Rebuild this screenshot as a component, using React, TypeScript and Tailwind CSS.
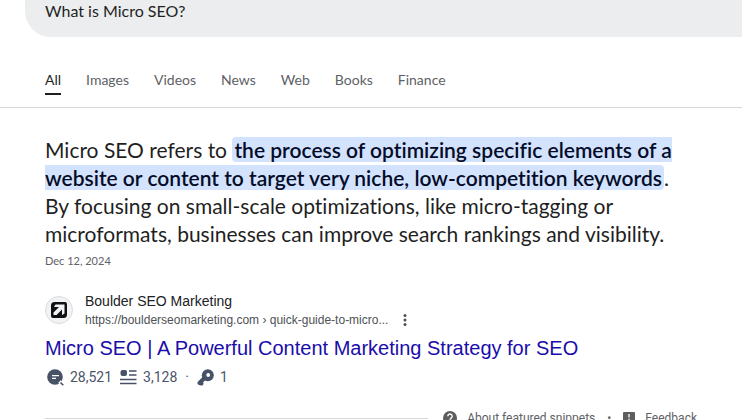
const tabs = [
  { label: "Images" },
  { label: "Videos" },
  { label: "News" },
  { label: "Web" },
  { label: "Books" },
  { label: "Finance" },
];

function SearchBar() {
  return (
    <form className="ml-[25px] h-[37px] rounded-bl-[26px] bg-[#ebedef] pl-5" onSubmit={(e) => e.preventDefault()}>
      <input
        aria-label="Search"
        defaultValue="What is Micro SEO?"
        className="block h-[22px] w-full bg-transparent font-['Lato',sans-serif] text-base leading-[22px] text-[#1f1f1f] outline-none"
      />
    </form>
  );
}

function Tabs() {
  return (
    <nav className="flex gap-[25px] border-b border-[#d5d7da] pt-8 pl-[45px] font-['Lato',sans-serif] text-sm leading-[22px] text-[#5e6166]">
      <a href="#all" className="mb-3 border-b-2 border-[#1f1f1f] pb-[2px] text-[#1f1f1f]">
        All
      </a>
      {tabs.map((t) => (
        <a key={t.label} href={"#" + t.label.toLowerCase()}>
          {t.label}
        </a>
      ))}
    </nav>
  );
}

function SiteIcon() {
  return (
    <span className="flex size-7 shrink-0 items-center justify-center rounded-full border border-[#dadce0] bg-[#f1f3f4]">
      <svg width="16" height="16" viewBox="0 0 16 16" aria-hidden="true">
        <path
          d="M3.500 0H14a2 2 0 0 1 2 2v10.500a3.500 3.500 0 0 1-3.500 3.500H2a2 2 0 0 1-2-2V3.500A3.500 3.500 0 0 1 3.500 0z"
          fill="#111"
        />
        <path d="M4.500 2.500h9v9L11 13V7.500L5.500 13H2.500v-2.500L8 5H3z" fill="#f1f3f4" />
      </svg>
    </span>
  );
}

function TrafficIcon() {
  return (
    <svg width="17" height="17" viewBox="0 0 17 17" aria-hidden="true">
      <circle cx="8" cy="8" r="7.800" fill="#475266" />
      <path d="M5 6.700h7M5 9.300h4" stroke="#fff" strokeWidth="1.300" />
      <path d="M12.500 12.500l4 4" stroke="#fff" strokeWidth="3.500" />
      <path d="M13.500 13.500l2.800 2.800" stroke="#475266" strokeWidth="1.600" />
    </svg>
  );
}

function WordsIcon() {
  return (
    <svg width="17" height="16" viewBox="0 0 17 16" aria-hidden="true" className="block">
      <rect x="0.500" y="1" width="6.500" height="6" rx="2" fill="#475266" />
      <path d="M9 2h7.500M9 6h7.500M0 10.500h16.500M0 14.500h16.500" stroke="#475266" strokeWidth="1.300" />
    </svg>
  );
}

function KeyIcon() {
  return (
    <svg width="17" height="17" viewBox="0 0 17 17" aria-hidden="true">
      <path d="M7 9.500L2.500 14l2 .5" stroke="#475266" strokeWidth="4" strokeLinejoin="round" strokeLinecap="round" fill="none" />
      <circle cx="10.800" cy="6.200" r="6" fill="#475266" />
      <circle cx="11.200" cy="6" r="1.900" fill="#fff" />
    </svg>
  );
}

function Result() {
  return (
    <article className="mt-[17px] font-['Liberation_Sans',Arial,sans-serif]">
      <div className="flex items-center gap-3">
        <SiteIcon />
        <div>
          <div className="text-sm leading-5 text-[#202124]">Boulder SEO Marketing</div>
          <div className="flex items-center gap-3 text-xs leading-[18px] text-[#4d5156]">
            <cite className="not-italic">https://boulderseomarketing.com › quick-guide-to-micro...</cite>
            <button type="button" aria-label="More options">
              <svg width="10" height="14" viewBox="0 0 10 14" fill="#4d5156" aria-hidden="true" className="block">
                <circle cx="5" cy="2.500" r="1.500" />
                <circle cx="5" cy="7" r="1.500" />
                <circle cx="5" cy="11.500" r="1.500" />
              </svg>
            </button>
          </div>
        </div>
      </div>
      <h3 className="mt-[6px] text-xl leading-[26px] text-[#1a0dab]">
        <a href="#result">Micro SEO | A Powerful Content Marketing Strategy for SEO</a>
      </h3>
      <div className="mt-[6px] flex items-center gap-2 pl-[2px] font-['Roboto',sans-serif] text-sm leading-5 text-[#4b5568]">
        <span className="flex items-center gap-[6px]">
          <TrafficIcon />
          28,521
        </span>
        <span className="flex items-center gap-[6px]">
          <WordsIcon />
          3,128
        </span>
        <span>·</span>
        <span className="flex items-center gap-[6px]">
          <KeyIcon />1
        </span>
      </div>
    </article>
  );
}

function SnippetFooter() {
  return (
    <footer className="mt-[22px] flex items-center pr-[45px] font-['Roboto',sans-serif] text-xs leading-[18px] text-[#5e6166]">
      <hr className="mr-[15px] flex-1 border-[#d5d7da]" />
      <a href="#about" className="flex items-center gap-[10px]">
        <svg width="14" height="14" viewBox="0 0 14 14" aria-hidden="true">
          <circle cx="7" cy="7" r="7" fill="#5e5e5e" />
          <path d="M4.800 5.300a2.200 2.200 0 1 1 3.400 1.800C7.300 7.700 7 8 7 8.800M7 10v1.500" stroke="#fff" strokeWidth="1.400" fill="none" />
        </svg>
        About featured snippets
      </a>
      <span className="mx-3">•</span>
      <a href="#feedback" className="flex items-center gap-[10px]">
        <svg width="12" height="12" viewBox="0 0 12 12" aria-hidden="true">
          <path d="M1 0h10a1 1 0 0 1 1 1v8a1 1 0 0 1-1 1H2l-2 2V1a1 1 0 0 1 1-1z" fill="#5e5e5e" />
          <path d="M6 2v3.500M6 6.800v1.400" stroke="#fff" strokeWidth="1.300" />
        </svg>
        Feedback
      </a>
    </footer>
  );
}

export default function App() {
  return (
    <div className="h-screen overflow-hidden bg-white">
      <SearchBar />
      <Tabs />
      <main className="pt-7 pl-[45px]">
        <div className="max-w-[652px] font-['Lato',sans-serif]">
          <p className="text-[21px] leading-7 text-[#1f1f1f] [font-variant-ligatures:none]">
            Micro SEO refers to{" "}
            <mark className="rounded bg-[#d3e3fd] pr-[2px] pl-[2px] font-semibold text-[#040c28]">
              the process of optimizing specific elements of a website or content to target very niche, low-competition
              keywords
            </mark>
            . By focusing on small-scale optimizations, like micro-tagging or microformats, businesses can improve search
            rankings and visibility.
          </p>
          <p className="text-[11px] leading-[26px] text-[#5e6166]">Dec 12, 2024</p>
        </div>
        <Result />
        <SnippetFooter />
      </main>
    </div>
  );
}
